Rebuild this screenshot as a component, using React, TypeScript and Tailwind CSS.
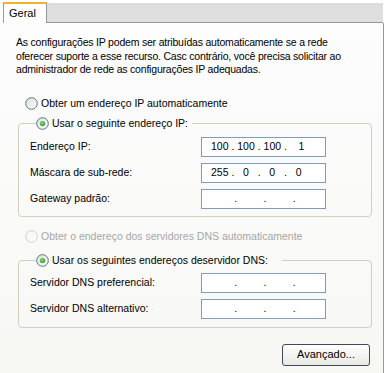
import React from "react";

function Radio({ checked, disabled }: { checked?: boolean; disabled?: boolean }) {
  return (
    <svg width="13" height="13" viewBox="0 0 13 13" className="shrink-0">
      <defs>
        <linearGradient id={disabled ? "rgd" : "rg"} x1="0" y1="0" x2="1" y2="1">
          <stop offset="0" stopColor={disabled ? "#f4f4f4" : "#dcdcd6"} />
          <stop offset="1" stopColor="#ffffff" />
        </linearGradient>
        <radialGradient id="dot" cx="0.4" cy="0.4" r="0.7">
          <stop offset="0" stopColor="#7ee07e" />
          <stop offset="1" stopColor="#1f9a1f" />
        </radialGradient>
      </defs>
      <circle
        cx="6.5"
        cy="6.5"
        r="5.8"
        fill={`url(#${disabled ? "rgd" : "rg"})`}
        stroke={disabled ? "#cfcfcf" : "#5f7388"}
        strokeWidth="1"
      />
      {checked && <circle cx="6.5" cy="6.5" r="2.6" fill="url(#dot)" />}
    </svg>
  );
}

function IpBox({ text }: { text: string }) {
  return (
    <div className="w-[125px] h-[20px] border border-[#7f9db9] bg-white flex items-center pl-[9px] whitespace-pre text-black">
      {text}
    </div>
  );
}

function Row({ label, value }: { label: string; value: string }) {
  return (
    <div className="flex items-center justify-between h-[20px]">
      <span>{label}</span>
      <IpBox text={value} />
    </div>
  );
}

const EMPTY = "        .         .         .   ";

export default function App() {
  return (
    <div
      className="w-[385px] h-[373px] bg-white overflow-hidden text-[10.5px] text-black"
      style={{ fontFamily: '"Liberation Sans", Arial, sans-serif' }}
    >
      <div className="flex h-[23px] pt-[2px]">
        <div className="w-[3px]" />
        <div className="w-[44px] border-t-[2px] border-t-[#f0b030] border-l border-r border-[#919b9c] bg-white pl-[5px] pt-[2px] leading-[14px] text-[11px]">
          Geral
        </div>
        <div className="flex-1 mt-[1px] mr-[2px] bg-[#dedede] border-b border-[#919b9c]" />
      </div>
      <div className="mr-[1px] h-[350px] border-r border-[#919b9c] bg-gradient-to-b from-[#fdfdfe] to-[#f7f7f4] pl-[16px] pr-[12px] pt-[13px]">
        <p className="leading-[13.5px] tracking-[-0.2px] whitespace-nowrap">
          As configurações IP podem ser atribuídas automaticamente se a rede
          <br />
          oferecer suporte a esse recurso. Casc contrário, você precisa solicitar ao
          <br />
          administrador de rede as configurações IP adequadas.
        </p>
        <div className="flex items-center gap-[3px] mt-[20px] pl-[9px] h-[14px]">
          <Radio />
          <span>Obter um endereço IP automaticamente</span>
        </div>
        <fieldset className="mt-[6px] ml-[2px] w-[354px] border border-[#d0d0bf] rounded-[4px] pl-[11px] pr-[45px] pb-[7px]">
          <legend className="flex items-center gap-[3px] ml-[6px] pr-[4px] h-[14px]">
            <Radio checked />
            <span>Usar o seguinte endereço IP:</span>
          </legend>
          <div className="flex flex-col gap-[6px] mt-[6px]">
            <Row label="Endereço IP:" value="100 . 100 . 100 .    1" />
            <Row label="Máscara de sub-rede:" value="255 .   0   .   0   .   0" />
            <Row label="Gateway padrão:" value={EMPTY} />
          </div>
        </fieldset>
        <div className="flex items-center gap-[3px] mt-[13px] pl-[9px] h-[14px] text-[#a7a7a7]">
          <Radio disabled />
          <span>Obter o endereço dos servidores DNS automaticamente</span>
        </div>
        <fieldset className="mt-[10px] ml-[2px] w-[354px] border border-[#d0d0bf] rounded-[4px] pl-[11px] pr-[45px] pb-[8px]">
          <legend className="flex items-center gap-[3px] ml-[6px] pr-[14px] h-[14px]">
            <Radio checked />
            <span>Usar os seguintes endereços deservidor DNS:</span>
          </legend>
          <div className="flex flex-col gap-[6px] mt-[5px]">
            <Row label="Servidor DNS preferencial:" value={EMPTY} />
            <Row label="Servidor DNS alternativo:" value={EMPTY} />
          </div>
        </fieldset>
        <div className="flex justify-end mt-[16px] pr-[1px]">
          <button className="w-[88px] h-[22px] rounded-[3px] border border-[#3c4a5c] bg-gradient-to-b from-white to-[#e9e8e3] text-[11px] text-black">
            Avançado...
          </button>
        </div>
      </div>
    </div>
  );
}
